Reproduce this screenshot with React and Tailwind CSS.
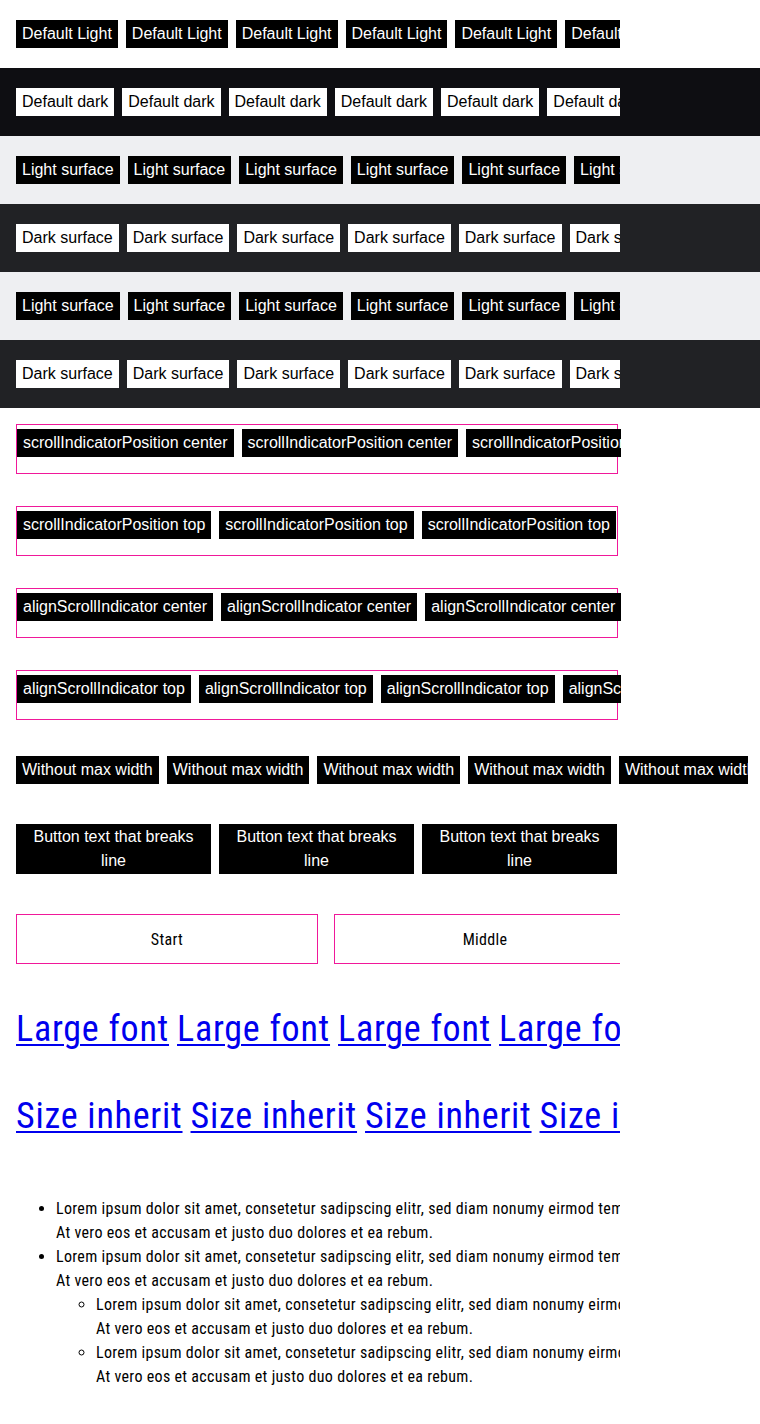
import React from 'react'

const chip = 'shrink-0 whitespace-nowrap px-[6px] py-[2px] leading-[24px] text-[16px]'
const dark = `${chip} bg-black text-white`
const light = `${chip} bg-white text-black`
const link = 'shrink-0 whitespace-nowrap text-[#0000ee] underline decoration-2 underline-offset-[3px] tracking-[0.021em]'

const Row = ({ bg, label, chipClass }) => (
  <div className={`${bg} px-4 py-5`}>
    <div className="flex w-[604px] gap-2 overflow-hidden">
      {Array.from({ length: 6 }).map((_, i) => (
        <span key={i} className={chipClass}>
          {label}
        </span>
      ))}
    </div>
  </div>
)

const Boxed = ({ label, count = 4 }) => (
  <div className="h-[50px] w-[602px] border border-[#f0189a] pt-1">
    <div className="flex w-[604px] gap-2 overflow-hidden">
      {Array.from({ length: count }).map((_, i) => (
        <span key={i} className={dark}>
          {label}
        </span>
      ))}
    </div>
  </div>
)

const lorem = 'Lorem ipsum dolor sit amet, consetetur sadipscing elitr, sed diam nonumy eirmod tempor invidunt ut labore et dolore magna aliquyam erat, sed diam voluptua.'
const vero = 'At vero eos et accusam et justo duo dolores et ea rebum.'

const Item = ({ children }) => (
  <li className="whitespace-nowrap">
    {lorem}
    <br />
    {vero}
    {children}
  </li>
)

export default function App() {
  return (
    <div className="min-h-[1424px] bg-white font-['Liberation_Sans',Arial,sans-serif] text-black">
      <Row bg="bg-white" label="Default Light" chipClass={dark} />
      <Row bg="bg-[#0e0e12]" label="Default dark" chipClass={light} />
      <Row bg="bg-[#eeeff2]" label="Light surface" chipClass={dark} />
      <Row bg="bg-[#212225]" label="Dark surface" chipClass={light} />
      <Row bg="bg-[#eeeff2]" label="Light surface" chipClass={dark} />
      <Row bg="bg-[#212225]" label="Dark surface" chipClass={light} />

      <div className="flex flex-col gap-8 px-4 pt-4">
        <Boxed label="scrollIndicatorPosition center" count={3} />
        <Boxed label="scrollIndicatorPosition top" count={3} />
        <Boxed label="alignScrollIndicator center" count={3} />
        <Boxed label="alignScrollIndicator top" count={4} />
      </div>

      <div className="mt-9 px-4">
        <div className="flex w-[732px] gap-2 overflow-hidden">
          {Array.from({ length: 5 }).map((_, i) => (
            <span key={i} className={dark}>
              Without max width
            </span>
          ))}
        </div>
      </div>

      <div className="mt-10 px-4">
        <div className="flex w-[604px] gap-2 overflow-hidden">
          {Array.from({ length: 3 }).map((_, i) => (
            <span key={i} className="w-[195px] shrink-0 bg-black px-[6px] py-[1px] text-center text-[16px] leading-[24px] text-white">
              Button text that breaks line
            </span>
          ))}
        </div>
      </div>

      <div className="font-['Roboto_Condensed','Liberation_Sans',sans-serif] tracking-[0.02em]">
        <div className="mt-10 px-4">
          <div className="flex w-[604px] gap-4 overflow-hidden">
            {['Start', 'Middle', 'End'].map((t) => (
              <div key={t} className="flex h-[50px] w-[302px] shrink-0 items-center justify-center border border-[#f0189a] pt-[1px] text-[16px]">
                {t}
              </div>
            ))}
          </div>
        </div>

        <div className="mt-[38px] px-4">
          <div className="flex w-[604px] gap-2 overflow-hidden text-[36px] leading-[54px]">
            {Array.from({ length: 5 }).map((_, i) => (
              <a key={i} href="#" className={link}>
                Large font
              </a>
            ))}
          </div>
        </div>

        <div className="mt-[33px] px-4">
          <div className="flex w-[604px] gap-2 overflow-hidden text-[36px] leading-[54px]">
            {Array.from({ length: 5 }).map((_, i) => (
              <a key={i} href="#" className={link}>
                Size inherit
              </a>
            ))}
          </div>
        </div>

        <div className="mt-[54px] px-4">
          <div className="w-[604px] overflow-hidden text-[16px] leading-[24px]">
            <ul className="list-disc pl-10">
              <Item />
              <Item>
                <ul className="list-[circle] pl-10">
                  <Item />
                  <Item />
                </ul>
              </Item>
            </ul>
          </div>
        </div>
      </div>
    </div>
  )
}
